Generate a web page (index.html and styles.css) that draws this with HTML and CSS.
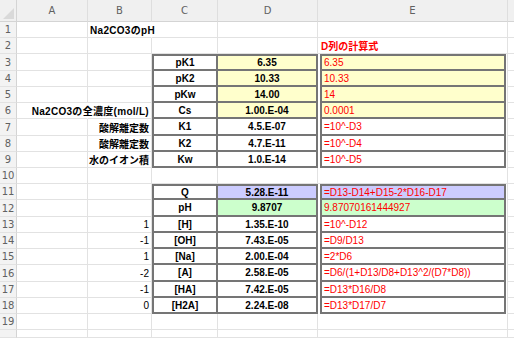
FILE: index.html
```html
<!DOCTYPE html>
<html lang="ja">
<head>
<meta charset="utf-8">
<title>Na2CO3のpH</title>
<link rel="stylesheet" href="styles.css">
</head>
<body>
<div class="sheet">
  <div class="row">
    <div class="corner"></div>
    <div class="hd">A</div><div class="hd">B</div><div class="hd">C</div><div class="hd">D</div><div class="hd">E</div><div class="hd last"></div>
  </div>

  <div class="row">
    <div class="rn">1</div>
    <div class="c"></div><div class="c b nor"><span class="txt wide">Na2CO3のpH</span></div><div class="c"></div><div class="c"></div><div class="c"></div><div class="c last"></div>
  </div>
  <div class="row">
    <div class="rn">2</div>
    <div class="c"></div><div class="c"></div><div class="c"></div><div class="c"></div><div class="c b red pad">D列の計算式</div><div class="c last"></div>
  </div>
  <div class="row">
    <div class="rn">3</div>
    <div class="c"></div><div class="c"></div>
    <div class="c bc top b ctr">pK1</div>
    <div class="c bd top b ctr yel">6.35</div>
    <div class="c be"><div class="ebox top yel">6.35</div></div>
    <div class="c last"></div>
  </div>
  <div class="row">
    <div class="rn">4</div>
    <div class="c"></div><div class="c"></div>
    <div class="c bc b ctr">pK2</div>
    <div class="c bd b ctr yel">10.33</div>
    <div class="c be"><div class="ebox yel">10.33</div></div>
    <div class="c last"></div>
  </div>
  <div class="row">
    <div class="rn">5</div>
    <div class="c"></div><div class="c"></div>
    <div class="c bc b ctr">pKw</div>
    <div class="c bd b ctr yel">14.00</div>
    <div class="c be"><div class="ebox yel">14</div></div>
    <div class="c last"></div>
  </div>
  <div class="row">
    <div class="rn">6</div>
    <div class="c nor"></div><div class="c b r"><span class="txt wide">Na2CO3の全濃度(mol/L)</span></div>
    <div class="c bc b ctr">Cs</div>
    <div class="c bd b ctr yel">1.00.E-04</div>
    <div class="c be"><div class="ebox yel">0.0001</div></div>
    <div class="c last"></div>
  </div>
  <div class="row">
    <div class="rn">7</div>
    <div class="c"></div><div class="c b r">酸解離定数</div>
    <div class="c bc b ctr">K1</div>
    <div class="c bd b ctr">4.5.E-07</div>
    <div class="c be"><div class="ebox">=10^-D3</div></div>
    <div class="c last"></div>
  </div>
  <div class="row">
    <div class="rn">8</div>
    <div class="c"></div><div class="c b r">酸解離定数</div>
    <div class="c bc b ctr">K2</div>
    <div class="c bd b ctr">4.7.E-11</div>
    <div class="c be"><div class="ebox">=10^-D4</div></div>
    <div class="c last"></div>
  </div>
  <div class="row">
    <div class="rn">9</div>
    <div class="c"></div><div class="c b r"><span class="txt">水のイオン積</span></div>
    <div class="c bc b ctr">Kw</div>
    <div class="c bd b ctr">1.0.E-14</div>
    <div class="c be"><div class="ebox">=10^-D5</div></div>
    <div class="c last"></div>
  </div>
  <div class="row">
    <div class="rn">10</div>
    <div class="c"></div><div class="c"></div><div class="c"></div><div class="c"></div><div class="c"></div><div class="c last"></div>
  </div>
  <div class="row">
    <div class="rn">11</div>
    <div class="c"></div><div class="c"></div>
    <div class="c bc top b ctr">Q</div>
    <div class="c bd top b ctr blu">5.28.E-11</div>
    <div class="c be"><div class="ebox top blu">=D13-D14+D15-2*D16-D17</div></div>
    <div class="c last"></div>
  </div>
  <div class="row">
    <div class="rn">12</div>
    <div class="c"></div><div class="c"></div>
    <div class="c bc b ctr">pH</div>
    <div class="c bd b ctr grn">9.8707</div>
    <div class="c be"><div class="ebox grn">9.87070161444927</div></div>
    <div class="c last"></div>
  </div>
  <div class="row">
    <div class="rn">13</div>
    <div class="c"></div><div class="c r">1</div>
    <div class="c bc b ctr">[H]</div>
    <div class="c bd b ctr">1.35.E-10</div>
    <div class="c be"><div class="ebox">=10^-D12</div></div>
    <div class="c last"></div>
  </div>
  <div class="row">
    <div class="rn">14</div>
    <div class="c"></div><div class="c r">-1</div>
    <div class="c bc b ctr">[OH]</div>
    <div class="c bd b ctr">7.43.E-05</div>
    <div class="c be"><div class="ebox">=D9/D13</div></div>
    <div class="c last"></div>
  </div>
  <div class="row">
    <div class="rn">15</div>
    <div class="c"></div><div class="c r">1</div>
    <div class="c bc b ctr">[Na]</div>
    <div class="c bd b ctr">2.00.E-04</div>
    <div class="c be"><div class="ebox">=2*D6</div></div>
    <div class="c last"></div>
  </div>
  <div class="row">
    <div class="rn">16</div>
    <div class="c"></div><div class="c r">-2</div>
    <div class="c bc b ctr">[A]</div>
    <div class="c bd b ctr">2.58.E-05</div>
    <div class="c be"><div class="ebox">=D6/(1+D13/D8+D13^2/(D7*D8))</div></div>
    <div class="c last"></div>
  </div>
  <div class="row">
    <div class="rn">17</div>
    <div class="c"></div><div class="c r">-1</div>
    <div class="c bc b ctr">[HA]</div>
    <div class="c bd b ctr">7.42.E-05</div>
    <div class="c be"><div class="ebox">=D13*D16/D8</div></div>
    <div class="c last"></div>
  </div>
  <div class="row">
    <div class="rn">18</div>
    <div class="c"></div><div class="c r">0</div>
    <div class="c bc b ctr">[H2A]</div>
    <div class="c bd b ctr">2.24.E-08</div>
    <div class="c be"><div class="ebox">=D13*D17/D7</div></div>
    <div class="c last"></div>
  </div>
  <div class="row">
    <div class="rn">19</div>
    <div class="c"></div><div class="c"></div><div class="c"></div><div class="c"></div><div class="c"></div><div class="c last"></div>
  </div>
  <div class="row">
    <div class="rn"></div>
    <div class="c"></div><div class="c"></div><div class="c"></div><div class="c"></div><div class="c"></div><div class="c last"></div>
  </div>
</div>
</body>
</html>
```

FILE: styles.css
```css
html, body {
  margin: 0;
  padding: 0;
  background: #ffffff;
}

body {
  width: 514px;
  height: 338px;
  overflow: hidden;
  font-family: "Liberation Sans", "Noto Sans CJK JP", sans-serif;
  font-size: 10px;
  color: #000;
}

.sheet {
  display: grid;
  grid-template-columns: 17px 71px 64px 66px 100px 190px 6px;
  grid-template-rows: 22px 16px 16px 17px 16px 16px 16px 17px 16px 16px 16px 16px 17px 16px 16px 16px 17px 16px 16px 16px 8px;
}

.row {
  display: contents;
}

.corner {
  position: relative;
  background: #f0f0f0;
  border-right: 1px solid #d4d4d4;
  border-bottom: 1px solid #d4d4d4;
}

.corner::after {
  content: "";
  position: absolute;
  right: 2px;
  bottom: 2px;
  width: 11px;
  height: 11px;
  background: #d9d9d9;
  clip-path: polygon(100% 0, 100% 100%, 0 100%);
}

.hd {
  background: #f0f0f0;
  color: #616161;
  font-family: "DejaVu Sans", "Liberation Sans", sans-serif;
  font-size: 10px;
  display: flex;
  align-items: center;
  justify-content: center;
  border-right: 1px solid #dedede;
  border-bottom: 1px solid #d4d4d4;
}

.rn {
  background: #f3f3f3;
  color: #616161;
  font-family: "DejaVu Sans", "Liberation Sans", sans-serif;
  font-size: 10px;
  display: flex;
  align-items: center;
  justify-content: center;
  border-right: 1px solid #d4d4d4;
  border-bottom: 1px solid #e2e2e2;
}

.c {
  box-sizing: border-box;
  display: flex;
  align-items: center;
  white-space: nowrap;
  padding: 0 2px;
  border-right: 1px solid #e2e2e2;
  border-bottom: 1px solid #e2e2e2;
  min-width: 0;
}

.nor {
  border-right-color: transparent;
}

.txt {
  flex-shrink: 0;
  position: relative;
  z-index: 1;
}

.wide {
  letter-spacing: 0.3px;
}

.last {
  border-right: 0;
}

.b {
  font-weight: bold;
}

.r {
  justify-content: flex-end;
}

.ctr {
  justify-content: center;
}

.red {
  color: #ff0000;
}

.pad {
  padding-left: 3px;
}

/* boxed columns */
.bc {
  border-left: 2px solid #757575;
  border-right: 2px solid #757575;
  border-bottom: 2px solid #757575;
}

.bd {
  border-right: 2px solid #757575;
  border-bottom: 2px solid #757575;
}

.bc.top,
.bd.top {
  border-top: 2px solid #757575;
}

.be {
  padding: 0 1px 0 2px;
  border-bottom: 0;
  align-items: stretch;
}

.ebox {
  flex: 1;
  display: flex;
  align-items: center;
  padding: 0 2px;
  color: #ff0000;
  border-left: 2px solid #757575;
  border-right: 2px solid #757575;
  border-bottom: 2px solid #757575;
}

.ebox.top {
  border-top: 2px solid #757575;
}

.yel {
  background: #ffffcc;
}

.blu {
  background: #ccccff;
}

.grn {
  background: #ccffcc;
}
```
